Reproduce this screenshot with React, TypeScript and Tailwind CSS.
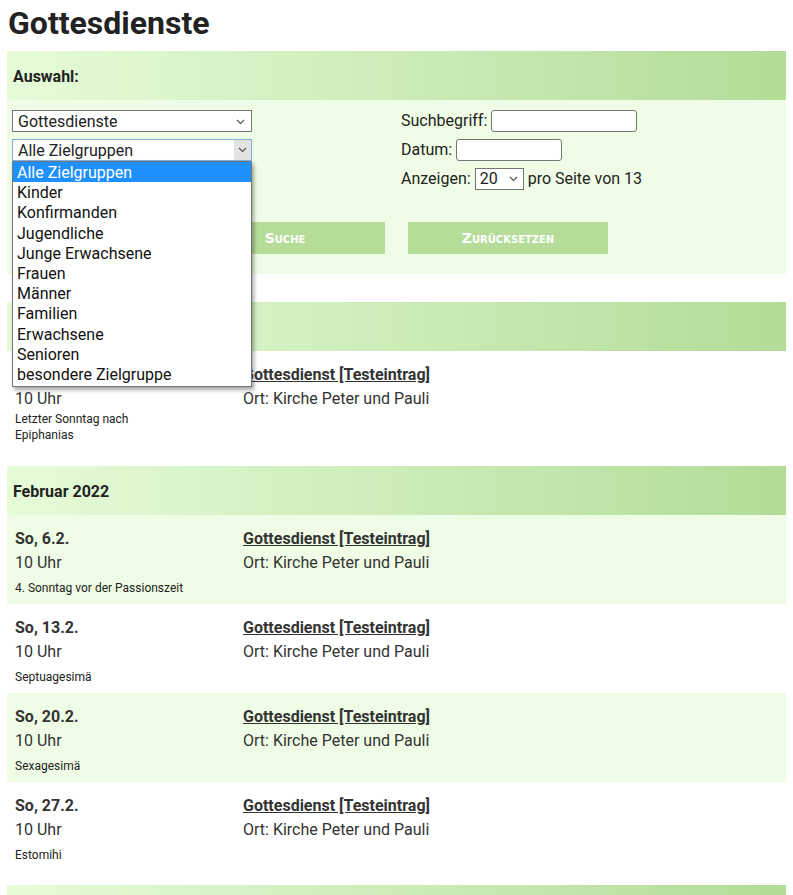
import React from "react";

type Termin = {
  datum: string;
  zeit: string;
  anlass: string;
  light: boolean;
  wide?: boolean;
};

type Monat = {
  name: string;
  termine: Termin[];
};

const zielgruppen = [
  "Alle Zielgruppen",
  "Kinder",
  "Konfirmanden",
  "Jugendliche",
  "Junge Erwachsene",
  "Frauen",
  "Männer",
  "Familien",
  "Erwachsene",
  "Senioren",
  "besondere Zielgruppe",
];

const monate: Monat[] = [
  {
    name: "Januar 2022",
    termine: [
      { datum: "So, 30.1.", zeit: "10 Uhr", anlass: "Letzter Sonntag nach Epiphanias", light: false, wide: true },
    ],
  },
  {
    name: "Februar 2022",
    termine: [
      { datum: "So, 6.2.", zeit: "10 Uhr", anlass: "4. Sonntag vor der Passionszeit", light: true },
      { datum: "So, 13.2.", zeit: "10 Uhr", anlass: "Septuagesimä", light: false },
      { datum: "So, 20.2.", zeit: "10 Uhr", anlass: "Sexagesimä", light: true },
      { datum: "So, 27.2.", zeit: "10 Uhr", anlass: "Estomihi", light: false },
    ],
  },
];

const Chevron: React.FC = () => (
  <svg width="9" height="6" viewBox="0 0 9 6" className="shrink-0">
    <polyline points="1,1 4.5,4.5 8,1" fill="none" stroke="#555" strokeWidth="1.2" />
  </svg>
);

const Band: React.FC<{ title: string }> = ({ title }) => (
  <div className="flex h-[49px] items-center bg-[linear-gradient(to_right,#e6fcd9,#b3dc97)] px-[6px] pt-[3px] text-[16px] font-bold text-[#222]">
    {title}
  </div>
);

const App: React.FC = () => {
  return (
    <div className="min-h-screen bg-white px-[7px] font-['Roboto',sans-serif] text-[16px] text-[#333]">
      <h1 className="pt-[3px] pl-[1px] text-[32px] leading-[40px] font-bold text-[#222]">Gottesdienste</h1>

      <div className="mt-[8px]">
        <Band title="Auswahl:" />
        <div className="bg-[#f0fde6] px-[5px] pt-[10px] pb-[20px]">
          <div className="flex">
            <div className="w-[389px] shrink-0">
              <div className="flex h-[22px] w-[240px] items-center justify-between border border-[#767676] bg-white pt-[2px] pr-[6px] pl-[5px] leading-none text-[#222]">
                <span>Gottesdienste</span>
                <Chevron />
              </div>
              <div className="relative z-10 mt-[7px] w-[240px]">
                <div className="flex h-[22px] items-center justify-between border border-[#7fb3e6] bg-white pl-[5px] leading-none text-[#222]">
                  <span className="pt-[2px]">Alle Zielgruppen</span>
                  <div className="flex h-full w-[17px] items-center justify-center bg-[#e3e3e3]">
                    <Chevron />
                  </div>
                </div>
                <div className="absolute top-full left-0 w-[240px] border border-[#767676] bg-white pb-[2px] shadow-[2px_3px_4px_rgba(0,0,0,0.35)]">
                  {zielgruppen.map((z, i) => (
                    <div
                      key={z}
                      className={`h-[20.2px] pl-[4px] leading-[21px] ${i === 0 ? "bg-[#1e90ff] text-white" : "text-[#111]"}`}
                    >
                      {z}
                    </div>
                  ))}
                </div>
              </div>
            </div>

            <div className="flex flex-col gap-[7px] text-[#222]">
              <div className="flex h-[22px] items-center gap-[4px]">
                <span>Suchbegriff:</span>
                <div className="h-[22px] w-[146px] rounded-[3px] border border-[#767676] bg-white" />
              </div>
              <div className="flex h-[22px] items-center gap-[4px]">
                <span>Datum:</span>
                <div className="h-[22px] w-[106px] rounded-[3px] border border-[#767676] bg-white" />
              </div>
              <div className="flex h-[22px] items-center gap-[4px]">
                <span>Anzeigen:</span>
                <div className="flex h-[22px] w-[49px] items-center justify-between border border-[#767676] bg-white pr-[5px] pl-[4px]">
                  <span>20</span>
                  <Chevron />
                </div>
                <span>pro Seite von 13</span>
              </div>
            </div>
          </div>
          <div className="mt-[32px] flex gap-[23px] pl-[173px]">
            <button className="h-[32px] w-[200px] bg-[#b5dd99] font-['DejaVu_Sans',sans-serif] text-[14px] font-bold text-white [font-variant:small-caps]">
              Suche
            </button>
            <button className="h-[32px] w-[200px] bg-[#b5dd99] font-['DejaVu_Sans',sans-serif] text-[14px] font-bold text-white [font-variant:small-caps]">
              Zurücksetzen
            </button>
          </div>
        </div>
      </div>

      <div className="mt-[28px] flex flex-col gap-[14px]">
        {monate.map((m) => (
          <div key={m.name}>
            <Band title={m.name} />
            {m.termine.map((t) => (
              <div
                key={t.datum}
                className={`flex pt-[12px] pr-[8px] pl-[8px] ${t.wide ? "pb-[9px]" : "pb-[8px]"} ${t.light ? "bg-[#f0fde6]" : "bg-white"}`}
              >
                <div className="w-[228px] shrink-0">
                  <div className="leading-[24px] font-bold">{t.datum}</div>
                  <div className="leading-[24px]">{t.zeit}</div>
                  <div className={`text-[12px] leading-[16px] text-[#222] ${t.wide ? "w-[140px]" : "mt-[5px]"}`}>
                    {t.anlass}
                  </div>
                </div>
                <div>
                  <div className="leading-[24px] font-bold underline">Gottesdienst [Testeintrag]</div>
                  <div className="leading-[24px]">Ort: Kirche Peter und Pauli</div>
                </div>
              </div>
            ))}
          </div>
        ))}
        <Band title="März 2022" />
      </div>
    </div>
  );
};

export default App;
